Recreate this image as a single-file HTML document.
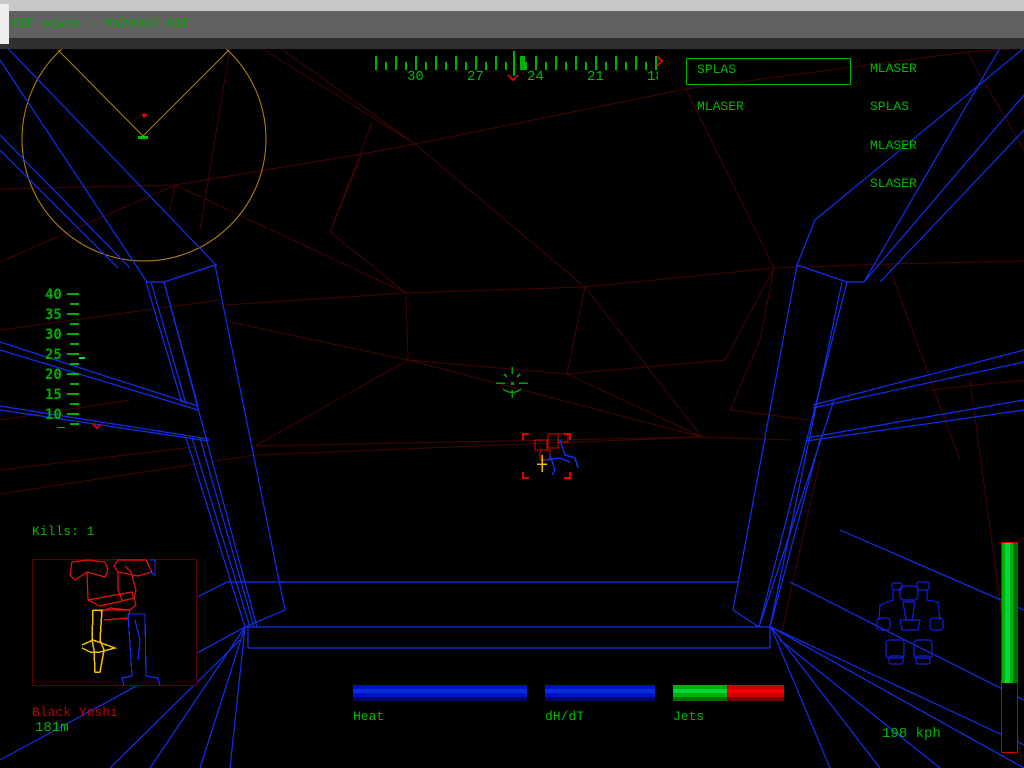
<!DOCTYPE html>
<html><head><meta charset="utf-8"><style>
html,body{margin:0;padding:0;background:#000;width:1024px;height:768px;overflow:hidden}
#c{position:absolute;left:0;top:0}
.t{font-family:"Liberation Mono","DejaVu Sans Mono",monospace;fill:#00b800;font-size:12px}
</style></head><body>
<svg id="c" width="1024" height="768" viewBox="0 0 1024 768" xmlns="http://www.w3.org/2000/svg" shape-rendering="crispEdges">
<rect width="1024" height="768" fill="#000"/>
<g stroke="#440505" stroke-width="1" fill="none" shape-rendering="auto">
<polyline points="261,48 415,144 585,287 702,437"/>
<polyline points="280,48 415,144"/>
<polyline points="415,144 686,89 967,52 1024,48"/>
<polyline points="686,89 774,268 888,264 1024,261"/>
<polyline points="0,189 175,185 362,154 415,144"/>
<polyline points="362,154 330,232 406,293 225,305"/>
<polyline points="175,185 406,293 585,287 774,268"/>
<polyline points="406,293 408,360 567,374 725,360 774,268"/>
<polyline points="585,287 567,374 702,437 255,446"/>
<polyline points="408,360 255,446"/>
<polyline points="408,360 702,437"/>
<polyline points="230,322 408,360"/>
<polyline points="372,123 330,232"/>
<polyline points="175,185 170,210"/>
<polyline points="0,262 175,185"/>
<polyline points="0,330 220,300"/>
<polyline points="0,420 130,400"/>
<polyline points="0,494 255,455 702,437 790,440"/>
<polyline points="0,470 210,445"/>
<polyline points="888,264 960,460"/>
<polyline points="774,268 760,340 730,410 810,420"/>
<polyline points="1024,380 930,390"/>
<polyline points="967,52 1024,150"/>
<polyline points="970,380 1024,780"/>
<polyline points="820,460 780,640"/>
<polyline points="230,48 200,230"/>
</g>
<g fill="none" stroke="#b8860b" stroke-width="1" shape-rendering="auto">
<circle cx="144" cy="139" r="122"/>
<polyline points="58,50 143,136 229,50"/>
</g>
<rect x="138" y="136" width="10" height="3" fill="#00c000"/>
<rect x="142" y="114" width="5" height="2" fill="#e00000"/><rect x="143" y="113" width="2" height="5" fill="#e00000"/>
<g stroke="#1030f0" stroke-width="1.2" fill="none" shape-rendering="auto">
<polyline points="0,40 217,266"/><polyline points="0,60 147,282"/>
<polyline points="0,135 130,268"/><polyline points="0,150 118,268"/>
<polyline points="146,282 164,282 215,265"/>
<polyline points="146,282 182,403"/><polyline points="151,282 186,404"/>
<polyline points="164,282 198,406"/><polyline points="164,282 257,627"/>
<polyline points="215,265 285,610 245,627"/>
<polyline points="186,438 245,627"/><polyline points="192,438 250,627"/><polyline points="200,438 254,627"/>
<polyline points="0,342 198,406"/><polyline points="0,350 198,410"/>
<polyline points="0,406 209,439"/><polyline points="0,410 209,441"/>
<polyline points="1000,48 864,282 847,282 797,265 815,220 1024,48"/>
<polyline points="1024,95 864,282"/>
<polyline points="1024,130 880,282"/>
<polyline points="797,265 733,610 759,627"/>
<polyline points="847,282 759,627"/><polyline points="842,282 770,627"/>
<polyline points="834,400 759,627"/><polyline points="820,440 770,627"/>
<polyline points="813,405 1024,350"/><polyline points="813,408 1024,362"/>
<polyline points="806,438 1024,400"/><polyline points="806,441 1024,410"/>
<polyline points="280,582 738,582"/>
<polyline points="245,627 771,627"/>
<polyline points="248,648 770,648"/>
<polyline points="248,627 248,648"/><polyline points="770,627 770,648"/>
<polyline points="197,597 227,582 283,582"/>
<polyline points="790,582 1024,700"/>
<polyline points="245,627 150,768"/><polyline points="245,627 200,768"/><polyline points="245,627 230,768"/><polyline points="245,627 0,760"/><polyline points="240,640 110,768"/>
<polyline points="771,627 1024,768"/><polyline points="771,627 880,768"/><polyline points="771,627 830,768"/><polyline points="771,627 1024,745"/><polyline points="780,640 940,768"/>
<polyline points="840,530 1024,610"/>
</g>
<rect x="0" y="0" width="1024" height="11" fill="#c8c8c8"/>
<rect x="0" y="11" width="1024" height="27" fill="#606060"/>
<rect x="0" y="38" width="1024" height="11" fill="#303030"/>
<rect x="0" y="4" width="9" height="40" fill="#eeeeee"/>
<text x="11" y="27" class="t" style="fill:#00a800;font-size:13px">GIF saved - MW20007.GIF</text>
<g fill="#00b000">
<rect x="375" y="56" width="2" height="14"/><rect x="385" y="62" width="2" height="8"/>
<rect x="395" y="56" width="2" height="14"/><rect x="405" y="62" width="2" height="8"/>
<rect x="415" y="56" width="2" height="14"/><rect x="425" y="62" width="2" height="8"/>
<rect x="435" y="56" width="2" height="14"/><rect x="445" y="62" width="2" height="8"/>
<rect x="455" y="56" width="2" height="14"/><rect x="465" y="62" width="2" height="8"/>
<rect x="475" y="56" width="2" height="14"/><rect x="485" y="62" width="2" height="8"/>
<rect x="495" y="56" width="2" height="14"/><rect x="505" y="62" width="2" height="8"/>
<rect x="513" y="51" width="2" height="19"/><rect x="520" y="56" width="5" height="14"/>
<rect x="525" y="62" width="2" height="8"/>
<rect x="535" y="56" width="2" height="14"/><rect x="545" y="62" width="2" height="8"/>
<rect x="555" y="56" width="2" height="14"/><rect x="565" y="62" width="2" height="8"/>
<rect x="575" y="56" width="2" height="14"/><rect x="585" y="62" width="2" height="8"/>
<rect x="595" y="56" width="2" height="14"/><rect x="605" y="62" width="2" height="8"/>
<rect x="615" y="56" width="2" height="14"/><rect x="625" y="62" width="2" height="8"/>
<rect x="635" y="56" width="2" height="14"/><rect x="645" y="62" width="2" height="8"/>
<rect x="655" y="56" width="2" height="14"/>
</g>
<text x="407" y="80" class="t" style="font-size:14px">30</text><text x="467" y="80" class="t" style="font-size:14px">27</text>
<text x="527" y="80" class="t" style="font-size:14px">24</text><text x="587" y="80" class="t" style="font-size:14px">21</text>
<text x="647" y="80" class="t" style="font-size:14px">18</text>
<rect x="658" y="66" width="10" height="18" fill="#000"/>
<polyline points="657,56 662,61 657,66" stroke="#e00000" stroke-width="2" fill="none"/>
<rect x="513" y="70" width="2" height="6" fill="#00b000"/>
<polyline points="508,75 513,80 518,75" stroke="#e00000" stroke-width="2" fill="none"/>
<rect x="686.5" y="58.5" width="164" height="26" fill="none" stroke="#00b000" stroke-width="1"/>
<text x="697" y="73" class="t" style="font-size:13px">SPLAS</text>
<text x="697" y="110" class="t" style="font-size:13px">MLASER</text>
<text x="870" y="72" class="t" style="font-size:13px">MLASER</text>
<text x="870" y="110" class="t" style="font-size:13px">SPLAS</text>
<text x="870" y="149" class="t" style="font-size:13px">MLASER</text>
<text x="870" y="187" class="t" style="font-size:13px">SLASER</text>
<g font-family="DejaVu Sans Mono,monospace" font-size="14" font-weight="bold" fill="#00b000">
<text x="45" y="299">40</text><text x="45" y="319">35</text><text x="45" y="339">30</text>
<text x="45" y="359">25</text><text x="45" y="379">20</text><text x="45" y="399">15</text><text x="45" y="419">10</text>
</g>
<g fill="#00b000">
<rect x="67" y="293" width="12" height="2"/><rect x="70" y="303" width="9" height="2"/>
<rect x="67" y="313" width="12" height="2"/><rect x="70" y="323" width="9" height="2"/>
<rect x="67" y="333" width="12" height="2"/><rect x="70" y="343" width="9" height="2"/>
<rect x="67" y="353" width="12" height="2"/><rect x="70" y="363" width="9" height="2"/>
<rect x="67" y="373" width="12" height="2"/><rect x="70" y="383" width="9" height="2"/>
<rect x="67" y="393" width="12" height="2"/><rect x="70" y="403" width="9" height="2"/>
<rect x="67" y="413" width="12" height="2"/><rect x="70" y="423" width="9" height="2"/>
<rect x="57" y="427" width="8" height="1"/>
<rect x="79" y="357" width="6" height="2" fill="#00e040"/>
</g>
<polyline points="93,424 97,428 101,424" stroke="#e00000" stroke-width="2" fill="none"/>
<g stroke="#00a000" stroke-width="1.5" fill="none">
<line x1="512" y1="367" x2="512" y2="374"/><line x1="512" y1="390" x2="512" y2="398"/>
<line x1="496" y1="383" x2="505" y2="383"/><line x1="519" y1="383" x2="528" y2="383"/>
<line x1="504" y1="374" x2="507" y2="377"/><line x1="520" y1="374" x2="517" y2="377"/>
<path d="M503,389 Q512,396 521,389"/>
</g>
<rect x="511" y="382" width="3" height="3" fill="#00a000"/>
<g stroke="#e00000" stroke-width="2" fill="none">
<polyline points="523,440 523,434 529,434"/><polyline points="564,434 570,434 570,440"/>
<polyline points="523,472 523,478 529,478"/><polyline points="564,478 570,478 570,472"/>
</g>
<g stroke="#e00000" stroke-width="1" fill="none">
<rect x="535" y="440" width="12" height="10"/><rect x="548" y="434" width="10" height="14"/><rect x="558" y="434" width="10" height="8"/><rect x="540" y="450" width="10" height="10"/>
</g>
<g stroke="#1030f0" stroke-width="1.5" fill="none">
<polyline points="560,440 565,455 575,458 578,468"/><polyline points="550,455 555,470 552,475"/><polyline points="545,460 560,458 570,462"/>
</g>
<g stroke="#f0c000" stroke-width="1.5" fill="none"><polyline points="542,455 542,472"/><line x1="537" y1="464" x2="547" y2="464"/></g>
<text x="32" y="535" class="t" style="font-size:13px">Kills: 1</text>
<rect x="32.5" y="559.5" width="164" height="126" fill="#000" stroke="#5a0000"/>
<g stroke="#f01010" stroke-width="1.2" fill="none" shape-rendering="auto">
<polygon points="72,562 88,560 105,562 108,570 105,577 87,572 75,580 70,575"/>
<polygon points="118,560 146,560 152,572 138,576 118,572 114,566"/>
<polyline points="87,572 88,600 100,606 118,602 134,598 136,590 131,572 125,566"/>
<polyline points="118,572 118,590 122,600"/>
<polyline points="88,600 110,596 132,592 136,605 130,610 110,608 100,612"/>
<polyline points="100,610 130,610 128,618 104,620"/>
</g>
<g stroke="#1030f0" stroke-width="1.2" fill="none">
<polyline points="128,614 145,614 146,676 158,678 160,686"/><polyline points="128,614 132,676 122,678 124,686"/>
<polyline points="135,620 140,640 138,660"/><polyline points="150,560 155,560 155,575 150,572"/>
</g>
<g stroke="#f0c000" stroke-width="1.5" fill="none">
<polyline points="93,610 102,610 100,640 104,650 100,672 95,672 94,650 92,640 93,610"/>
<polyline points="82,645 93,640 115,648 100,652 90,652 82,648"/>
</g>
<text x="32" y="716" class="t" style="fill:#c00000;font-size:13px">Black Yoshi</text>
<text x="35" y="731" class="t" style="font-size:14px">181m</text>
<rect x="353" y="685" width="174" height="16" fill="#0010c8"/><rect x="353" y="689" width="174" height="4" fill="#0030d8"/><rect x="353" y="697" width="174" height="4" fill="#000870"/>
<rect x="545" y="685" width="110" height="16" fill="#0010c8"/><rect x="545" y="689" width="110" height="4" fill="#0030d8"/><rect x="545" y="697" width="110" height="4" fill="#000870"/>
<rect x="673" y="685" width="54" height="16" fill="#00b000"/><rect x="673" y="689" width="54" height="4" fill="#00d840"/><rect x="673" y="697" width="54" height="4" fill="#007000"/>
<rect x="727" y="685" width="57" height="16" fill="#d00000"/><rect x="727" y="689" width="57" height="4" fill="#f00000"/><rect x="727" y="697" width="57" height="4" fill="#800000"/>
<text x="353" y="720" class="t" style="font-size:13px">Heat</text><text x="545" y="720" class="t" style="font-size:13px">dH/dT</text><text x="673" y="720" class="t" style="font-size:13px">Jets</text>
<g stroke="#1020e0" stroke-width="1.2" fill="none" shape-rendering="auto">
<rect x="892" y="583" width="10" height="7" rx="2"/><rect x="917" y="582" width="12" height="8" rx="2"/>
<rect x="900" y="586" width="18" height="14" rx="4"/>
<polyline points="893,590 893,600 880,605 879,620"/><polyline points="927,590 927,600 938,602 940,620"/>
<rect x="877" y="618" width="13" height="12" rx="3"/><rect x="930" y="618" width="13" height="12" rx="3"/>
<polygon points="903,602 915,602 912,620 906,620"/>
<polyline points="900,620 920,620 918,630 902,630 900,620"/>
<rect x="886" y="640" width="18" height="18" rx="3"/><rect x="914" y="640" width="18" height="18" rx="3"/>
<rect x="889" y="656" width="14" height="8" rx="2"/><rect x="916" y="656" width="14" height="8" rx="2"/>
</g>
<rect x="1001.5" y="542.5" width="16" height="210" fill="#000" stroke="#d00000"/>
<rect x="1002" y="543" width="15" height="140" fill="#00b000"/><rect x="1005" y="543" width="5" height="140" fill="#00d840"/><rect x="1013" y="543" width="4" height="140" fill="#007000"/>
<text x="882" y="737" class="t" style="font-size:14px">198 kph</text>
</svg>
</body></html>
